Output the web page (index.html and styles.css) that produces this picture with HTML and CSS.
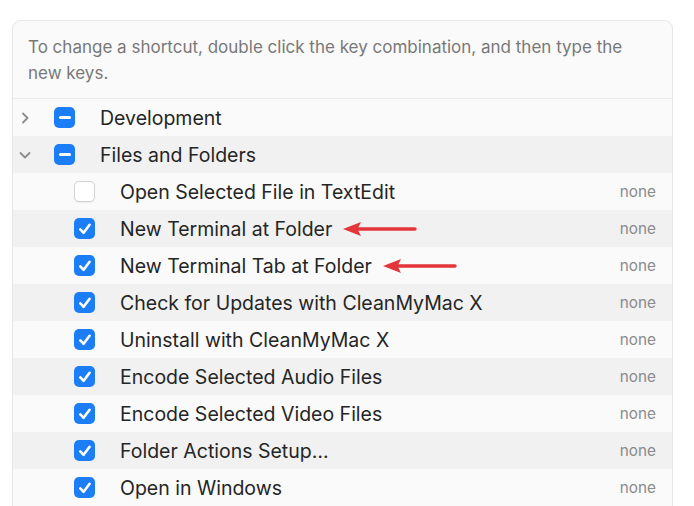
FILE: index.html
```html
<!DOCTYPE html>
<html lang="en">
<head>
<meta charset="utf-8">
<title>Keyboard Shortcuts</title>
<link rel="stylesheet" href="styles.css">
</head>
<body>
<div class="panel">
  <p class="hint">To change a shortcut, double click the key combination, and then type the new keys.</p>
  <ul class="list">
    <li class="row group">
      <svg class="disc" viewBox="0 0 16 16" width="16" height="16"><path d="M6 3.5 L10.5 8 L6 12.5" /></svg>
      <span class="cb on"><span class="minus"></span></span>
      <span class="label">Development</span>
    </li>
    <li class="row group">
      <svg class="disc" viewBox="0 0 16 16" width="16" height="16"><path d="M3.5 6 L8 10.5 L12.5 6" /></svg>
      <span class="cb on"><span class="minus"></span></span>
      <span class="label">Files and Folders</span>
    </li>
    <li class="row item">
      <span class="cb off"></span>
      <span class="label">Open Selected File in TextEdit</span>
      <span class="key">none</span>
    </li>
    <li class="row item">
      <span class="cb on"><svg viewBox="0 0 20 20" width="20" height="20"><path class="tick" d="M5.3 10.4 L8.6 13.8 L14.6 5.8" /></svg></span>
      <span class="label">New Terminal at Folder</span>
      <svg class="arrow" viewBox="0 0 74 16" width="74" height="16"><path class="shaft" d="M14 8 H72" /><path class="head" d="M0 8 L18 1 L14.5 8 L18 15 Z" /></svg>
      <span class="key">none</span>
    </li>
    <li class="row item">
      <span class="cb on"><svg viewBox="0 0 20 20" width="20" height="20"><path class="tick" d="M5.3 10.4 L8.6 13.8 L14.6 5.8" /></svg></span>
      <span class="label">New Terminal Tab at Folder</span>
      <svg class="arrow" viewBox="0 0 74 16" width="74" height="16"><path class="shaft" d="M14 8 H72" /><path class="head" d="M0 8 L18 1 L14.5 8 L18 15 Z" /></svg>
      <span class="key">none</span>
    </li>
    <li class="row item">
      <span class="cb on"><svg viewBox="0 0 20 20" width="20" height="20"><path class="tick" d="M5.3 10.4 L8.6 13.8 L14.6 5.8" /></svg></span>
      <span class="label">Check for Updates with CleanMyMac X</span>
      <span class="key">none</span>
    </li>
    <li class="row item">
      <span class="cb on"><svg viewBox="0 0 20 20" width="20" height="20"><path class="tick" d="M5.3 10.4 L8.6 13.8 L14.6 5.8" /></svg></span>
      <span class="label">Uninstall with CleanMyMac X</span>
      <span class="key">none</span>
    </li>
    <li class="row item">
      <span class="cb on"><svg viewBox="0 0 20 20" width="20" height="20"><path class="tick" d="M5.3 10.4 L8.6 13.8 L14.6 5.8" /></svg></span>
      <span class="label">Encode Selected Audio Files</span>
      <span class="key">none</span>
    </li>
    <li class="row item">
      <span class="cb on"><svg viewBox="0 0 20 20" width="20" height="20"><path class="tick" d="M5.3 10.4 L8.6 13.8 L14.6 5.8" /></svg></span>
      <span class="label">Encode Selected Video Files</span>
      <span class="key">none</span>
    </li>
    <li class="row item">
      <span class="cb on"><svg viewBox="0 0 20 20" width="20" height="20"><path class="tick" d="M5.3 10.4 L8.6 13.8 L14.6 5.8" /></svg></span>
      <span class="label">Folder Actions Setup…</span>
      <span class="key">none</span>
    </li>
    <li class="row item">
      <span class="cb on"><svg viewBox="0 0 20 20" width="20" height="20"><path class="tick" d="M5.3 10.4 L8.6 13.8 L14.6 5.8" /></svg></span>
      <span class="label">Open in Windows</span>
      <span class="key">none</span>
    </li>
  </ul>
</div>
</body>
</html>
```

FILE: styles.css
```css
html, body {
  margin: 0;
  background: #ffffff;
}
body {
  padding: 20px 21px 0 12px;
  font-family: Inter, "Noto Sans", "Liberation Sans", sans-serif;
  overflow: hidden;
  height: 506px;
  box-sizing: border-box;
}
.panel {
  width: 661px;
  box-sizing: border-box;
  border: 1px solid #e6e6e6;
  border-bottom: none;
  border-radius: 9px 9px 0 0;
  background: #fafafa;
  overflow: hidden;
}
.hint {
  margin: 0;
  padding: 13px 30px 12px 15px;
  font-size: 17px;
  line-height: 26px;
  color: #787878;
  border-bottom: 1px solid #ebebeb;
}
.list {
  list-style: none;
  margin: 0;
  padding: 0;
}
.row {
  height: 37px;
  display: flex;
  align-items: center;
  background: #fafafa;
  padding-right: 16px;
  color: #252525;
  font-size: 19.5px;
}
.row:nth-child(even) {
  background: #f1f1f1;
}
.group {
  padding-left: 4px;
}
.item {
  padding-left: 61px;
}
.disc {
  width: 16px;
  height: 16px;
  fill: none;
  stroke: #8c8c8c;
  stroke-width: 1.8;
  stroke-linecap: round;
  stroke-linejoin: round;
}
.group .cb {
  margin-left: 21px;
}
.cb {
  width: 21px;
  height: 21px;
  border-radius: 5px;
  box-sizing: border-box;
  display: flex;
  align-items: center;
  justify-content: center;
  flex: none;
}
.cb.on {
  background: #1b7ef6;
}
.cb.off {
  background: #ffffff;
  border: 1px solid #d3d3d3;
  box-shadow: 0 0.5px 1px rgba(0,0,0,0.06);
}
.minus {
  width: 12px;
  height: 3px;
  border-radius: 2px;
  background: #ffffff;
}
.tick {
  fill: none;
  stroke: #ffffff;
  stroke-width: 2.6;
  stroke-linecap: round;
  stroke-linejoin: round;
}
.label {
  margin-left: 25px;
  white-space: nowrap;
}
.arrow {
  margin-left: 11px;
  flex: none;
}
.shaft {
  stroke: #e3353a;
  stroke-width: 3.4;
  stroke-linecap: round;
}
.head {
  fill: #e3353a;
}
.key {
  margin-left: auto;
  font-size: 15.3px;
  color: #8a8a8a;
}
```
